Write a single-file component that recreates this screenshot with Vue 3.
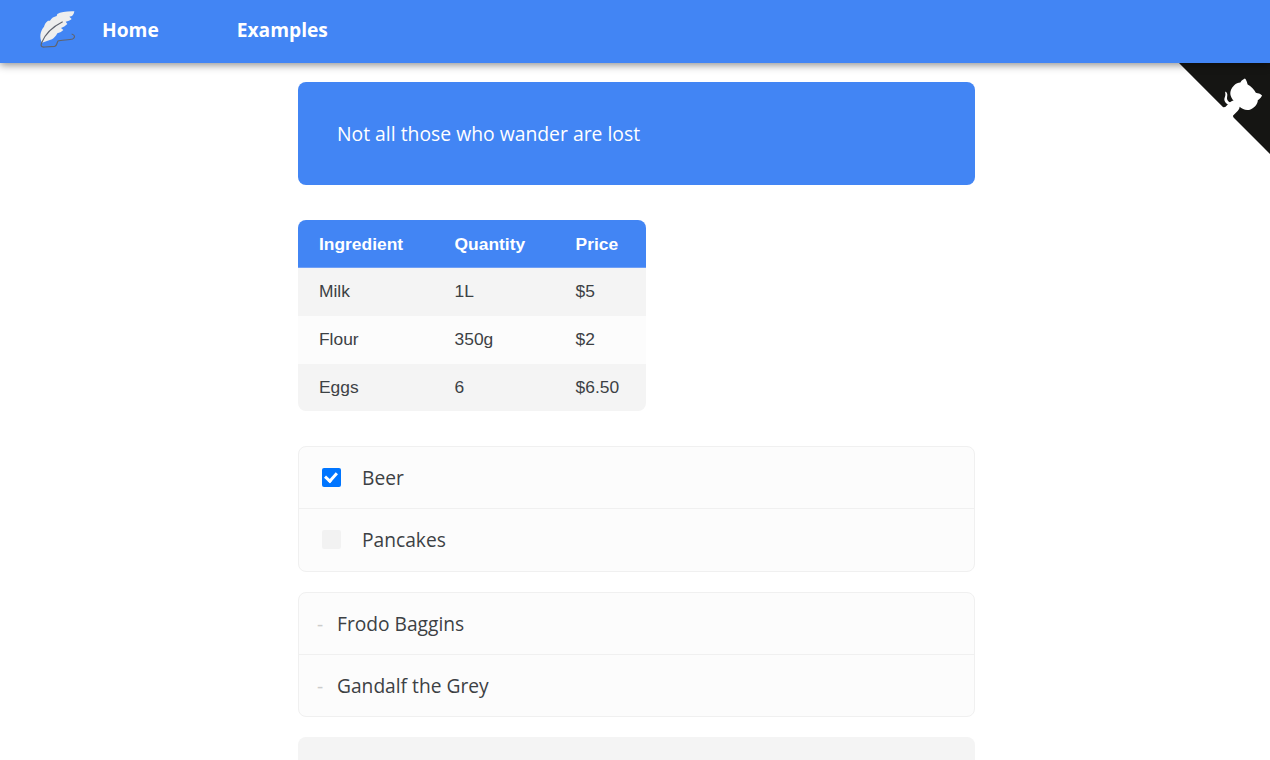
<script setup>
const ingredients = [
  { name: 'Milk', quantity: '1L', price: '$5' },
  { name: 'Flour', quantity: '350g', price: '$2' },
  { name: 'Eggs', quantity: '6', price: '$6.50' }
]
const tasks = [
  { label: 'Beer', done: true },
  { label: 'Pancakes', done: false }
]
const people = ['Frodo Baggins', 'Gandalf the Grey']
</script>

<template>
  <div class="page">
    <nav class="navbar">
      <svg class="logo" viewBox="0 0 180 180" width="60" height="60" aria-hidden="true">
        <path class="feather" d="M36 128 C28 112 30 94 42 80 C44 72 48 66 54 62 L60 62 C64 54 72 50 80 48 L82 42 C92 36 112 33 133 34 C132 40 130 45 126 48 L118 50 L125 57 C120 62 114 64 107 65 L112 72 C106 78 100 82 93 84 L100 90 C94 96 88 98 82 100 C78 108 72 114 66 118 C56 122 46 124 36 128 Z" />
        <path class="quill" d="M98 65 C72 78 46 100 35 128 C31 138 34 142 44 141 L74 139 C82 137 80 128 84 123 C94 120 118 120 128 117 C136 113 136 105 125 102" />
      </svg>
      <a class="nav-link">Home</a>
      <a class="nav-link">Examples</a>
    </nav>

    <svg class="corner" viewBox="0 0 250 250" aria-hidden="true">
      <path fill="#151513" d="M0,0 L115,115 L130,115 L142,142 L250,250 L250,0 Z" />
      <path fill="#fff" d="M128.3,109.0 C113.8,99.7 119.0,89.6 119.0,89.6 C122.0,82.7 120.5,78.6 120.5,78.6 C119.2,72.0 123.4,76.3 123.4,76.3 C127.3,80.9 125.5,87.3 125.5,87.3 C122.9,97.6 130.6,101.9 134.4,103.2" />
      <path fill="#fff" d="M115.0,115.0 C114.9,115.1 118.7,116.5 119.8,115.4 L133.7,101.6 C136.9,99.2 139.9,98.4 142.2,98.6 C133.8,88.0 127.5,74.4 143.8,58.0 C148.5,53.4 154.0,51.2 159.7,51.0 C160.3,49.4 163.2,43.6 171.4,40.1 C171.4,40.1 176.1,42.5 178.8,56.2 C183.1,58.6 187.2,61.8 190.9,65.4 C194.5,69.0 197.7,73.2 200.1,77.6 C213.8,80.2 216.3,84.9 216.3,84.9 C212.7,93.1 206.9,96.0 205.4,96.6 C205.1,102.4 203.0,107.8 198.3,112.5 C181.9,128.9 168.3,122.5 157.7,114.1 C157.9,116.9 156.7,120.9 152.7,124.9 L141.0,136.5 C139.8,137.7 141.6,141.9 141.8,141.8 Z" />
    </svg>

    <main class="content">
      <blockquote class="quote">Not all those who wander are lost</blockquote>

      <table class="recipe">
        <thead>
          <tr>
            <th class="col-name">Ingredient</th>
            <th class="col-qty">Quantity</th>
            <th class="col-price">Price</th>
          </tr>
        </thead>
        <tbody>
          <tr v-for="item in ingredients" :key="item.name">
            <td>{{ item.name }}</td>
            <td>{{ item.quantity }}</td>
            <td>{{ item.price }}</td>
          </tr>
        </tbody>
      </table>

      <ul class="list">
        <li v-for="task in tasks" :key="task.label" class="list-row">
          <input class="check" type="checkbox" :checked="task.done" />
          <span>{{ task.label }}</span>
        </li>
      </ul>

      <ul class="list">
        <li v-for="person in people" :key="person" class="list-row">
          <span class="dash">-</span>
          <span>{{ person }}</span>
        </li>
      </ul>

      <pre class="code-block"></pre>
    </main>
  </div>
</template>

<style>
html, body {
  margin: 0;
  background: #fff;
  overflow: hidden;
}
</style>

<style scoped>
.page {
  position: relative;
  height: 760px;
  overflow: hidden;
  font-family: "Open Sans", sans-serif;
  color: #3c4144;
}

.navbar {
  position: relative;
  z-index: 2;
  display: flex;
  align-items: center;
  height: 63px;
  padding-left: 30px;
  background: #4285f4;
  box-shadow: 0 2px 8px rgba(0, 0, 0, 0.45);
}

.logo {
  margin-right: 12px;
  margin-bottom: 3px;
}

.feather {
  fill: #eeeeee;
}

.quill {
  fill: none;
  stroke: #5f636e;
  stroke-width: 3.5;
}

.nav-link {
  margin-right: 78px;
  margin-bottom: 5px;
  font-size: 19.2px;
  font-weight: 700;
  color: #fff;
}

.corner {
  position: absolute;
  top: 63px;
  right: -5px;
  width: 96px;
  height: 96px;
}

.content {
  display: flex;
  flex-direction: column;
  align-items: flex-start;
  gap: 20px;
  width: 677px;
  margin-left: 298px;
  padding-top: 19px;
}

.quote {
  box-sizing: border-box;
  width: 100%;
  height: 103px;
  margin: 0 0 15px;
  padding: 0 39px;
  display: flex;
  align-items: center;
  border-radius: 8px;
  background: #4285f4;
  color: #fff;
  font-size: 19.35px;
}

.recipe {
  border-collapse: separate;
  border-spacing: 0;
  margin-bottom: 15px;
  border-radius: 8px;
  overflow: hidden;
  font-family: "Liberation Sans", Arial, sans-serif;
  font-size: 17.4px;
}

.recipe th,
.recipe td {
  box-sizing: border-box;
  height: 48px;
  padding: 0 0 1px 21px;
  text-align: left;
}

.recipe th {
  padding: 0 0 0 21px;
  background: #4285f4;
  box-shadow: inset 0 -1px 0 #6f9ff6;
  color: #fff;
  font-weight: 700;
}

.col-name {
  width: 135.6px;
}

.col-qty {
  width: 121px;
}

.col-price {
  width: 91.4px;
}

.recipe tbody tr:nth-child(odd) td {
  background: #f4f4f4;
}

.recipe tbody tr:nth-child(even) td {
  background: #fcfcfc;
}

.recipe tbody tr:last-child td {
  height: 47px;
  padding-bottom: 0;
}

.list {
  box-sizing: border-box;
  width: 100%;
  margin: 0;
  padding: 0;
  list-style: none;
  border: 1px solid #f0f0f0;
  border-radius: 8px;
  background: #fcfcfc;
  font-size: 19.2px;
}

.list-row {
  display: flex;
  align-items: center;
  height: 61.25px;
}

.list-row + .list-row {
  border-top: 1px solid #f0f0f0;
}

.check {
  position: relative;
  width: 19px;
  height: 19px;
  margin: 0 21px 0 23px;
  appearance: none;
  border-radius: 2px;
  background: #f2f2f2;
}

.check:checked {
  background: #0075ff;
}

.check:checked::after {
  content: "";
  position: absolute;
  left: 5px;
  top: 2px;
  width: 5px;
  height: 9px;
  border: solid #fff;
  border-width: 0 3.4px 3.4px 0;
  transform: rotate(42deg);
}

.dash {
  width: 38px;
  padding-left: 18px;
  box-sizing: border-box;
  color: #ccc;
}

.code-block {
  box-sizing: border-box;
  width: 100%;
  height: 100px;
  margin: 0;
  border-radius: 8px;
  background: #f4f4f4;
}
</style>
